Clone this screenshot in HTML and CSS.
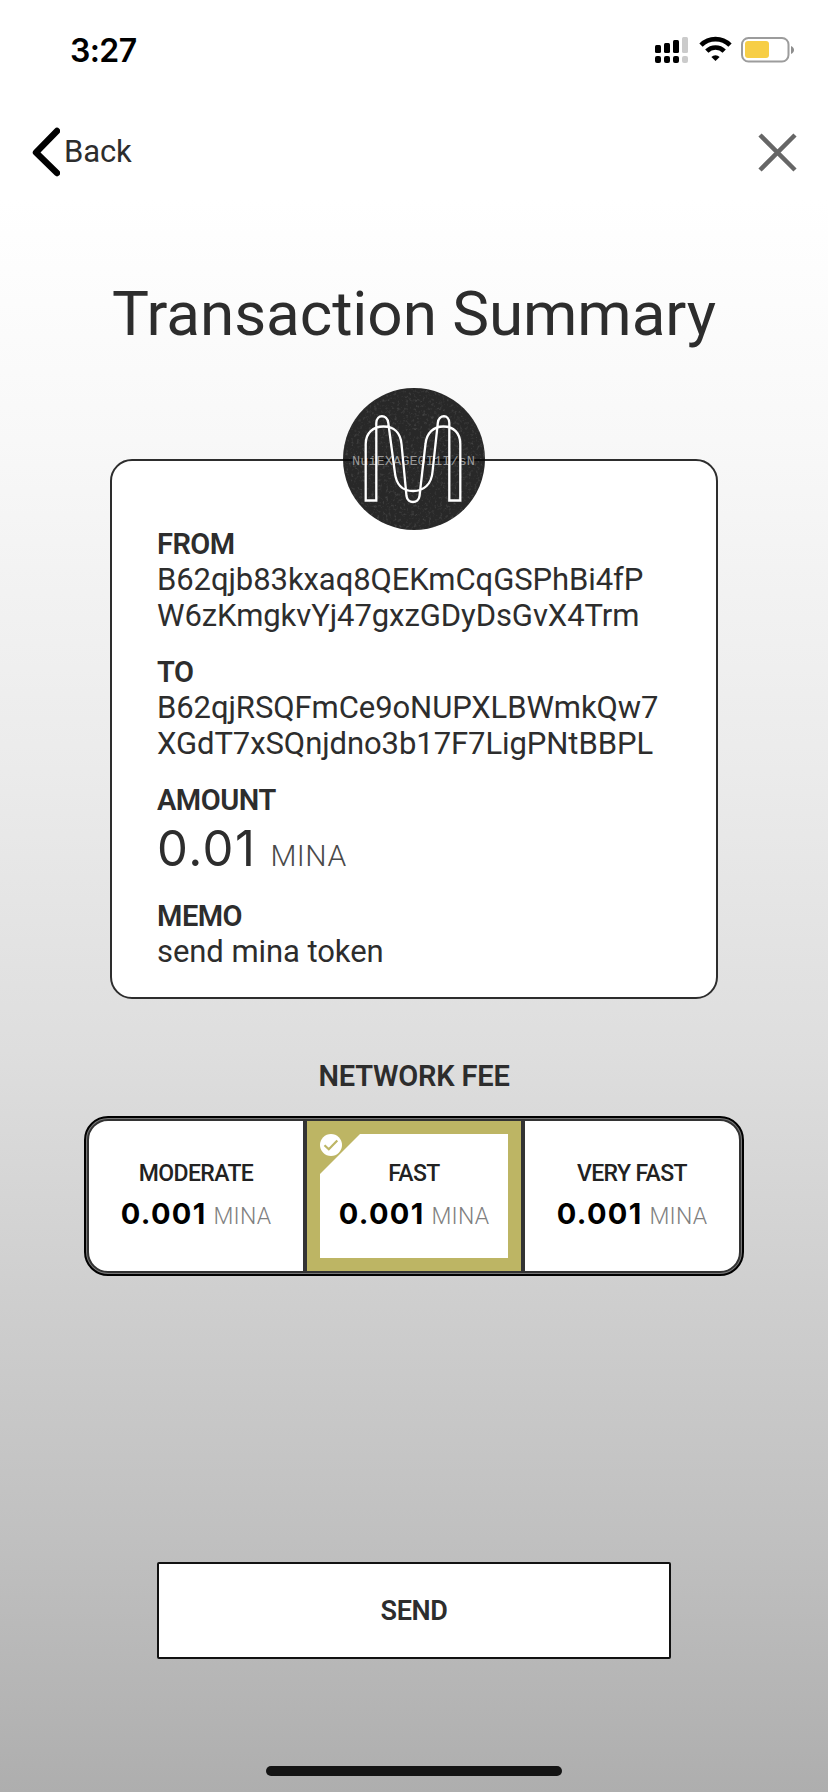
FILE: index.html
```html
<!DOCTYPE html>
<html lang="en">
<head>
<meta charset="utf-8">
<title>Transaction Summary</title>
<link rel="stylesheet" href="styles.css">
</head>
<body>
<div class="screen">
  <header class="status">
    <span class="time">3:27</span>
    <svg class="status-icons" width="144" height="32" viewBox="0 0 144 32">
      <g fill="#000">
        <rect x="3" y="11" width="6" height="8" rx="1.5"/><rect x="12" y="9" width="6" height="10" rx="1.5"/><rect x="21" y="6" width="6" height="13" rx="1.5"/>
        <rect x="3" y="22" width="6" height="7" rx="2"/><rect x="12" y="22" width="6" height="7" rx="2"/><rect x="21" y="22" width="6" height="7" rx="2"/>
      </g>
      <g fill="#cbcbcb"><rect x="30" y="3" width="6" height="16" rx="1.5"/><rect x="30" y="22" width="6" height="7" rx="2"/></g>
      <g fill="none" stroke="#000" stroke-width="4.6">
        <path d="M49 11.2a20.3 20.3 0 0 1 29 0"/>
        <path d="M54.800 17.200a12.200 12.200 0 0 1 17.400 0"/>
      </g>
      <path d="M63.500 27l-4.100-4.100a5.800 5.800 0 0 1 8.200 0z" fill="#000"/>
      <rect x="90" y="4" width="46.500" height="23.500" rx="6.500" fill="#fff" stroke="#9c9c9c" stroke-width="2"/>
      <rect x="93" y="7" width="24" height="17" rx="3" fill="#f7ce46"/>
      <path d="M139 12c4 1.500 4 6.500 0 8z" fill="#8e8e8e"/>
    </svg>
  </header>
  <nav class="nav">
    <a class="back">
      <svg width="30" height="50" viewBox="0 0 30 50"><path d="M27 4L6 25.500L27 46" fill="none" stroke="#000" stroke-width="6.400" stroke-linecap="round" stroke-linejoin="round"/></svg>
      <span class="back-label">Back</span>
    </a>
    <svg class="close" width="40" height="40" viewBox="0 0 40 40"><path d="M2 2L37 37M37 2L2 37" fill="none" stroke="#666" stroke-width="4.500"/></svg>
  </nav>
  <h1 class="title">Transaction Summary</h1>
  <main class="card">
    <svg class="avatar" width="142" height="142" viewBox="0 0 142 142">
      <defs>
        <clipPath id="disc"><circle cx="71" cy="71" r="71"/></clipPath>
        <filter id="grain" x="0" y="0" width="100%" height="100%">
          <feTurbulence type="fractalNoise" baseFrequency=".35" numOctaves="3" seed="4"/>
          <feColorMatrix values="0 0 0 0 1  0 0 0 0 1  0 0 0 0 1  1.500 0 0 0 -.78"/>
        </filter>
      </defs>
      <g clip-path="url(#disc)">
        <rect width="142" height="142" fill="#282828"/>
        <rect width="142" height="142" filter="url(#grain)" opacity=".25"/>
        <rect y="71" width="142" height="2" fill="#0c0c0c"/>
      </g>
      <text x="9" y="77" class="glitch" textLength="123" lengthAdjust="spacingAndGlyphs">NuiEXAGE0I1I/sN</text>
      <path d="M22.700 112.500V56C22.700 45 30 38.500 40.500 38.500S57.500 45 58.500 56L63.500 108C64.500 116 75.500 116 76.500 108L82.500 56C83.500 45 90.500 38.500 100.500 38.500S117.300 45 117.300 56V112.500H106.300V35C106.300 26 95.800 26 94.800 35L89.500 84C88.500 96 81 103 70 103S53 96 51.800 84L45.300 35C44.300 26 33.300 26 33.300 35V112.500Z" fill="none" stroke="#fff" stroke-width="2.300"/>
    </svg>
    <section class="field">
      <h2 class="label">FROM</h2>
      <p class="value">B62qjb83kxaq8QEKmCqGSPhBi4fP<br>W6zKmgkvYj47gxzGDyDsGvX4Trm</p>
    </section>
    <section class="field">
      <h2 class="label">TO</h2>
      <p class="value">B62qjRSQFmCe9oNUPXLBWmkQw7<br>XGdT7xSQnjdno3b17F7LigPNtBBPL</p>
    </section>
    <section class="field">
      <h2 class="label">AMOUNT</h2>
      <p class="amount-row"><span class="amount-num">0.01</span><span class="amount-unit">MINA</span></p>
    </section>
    <section class="field">
      <h2 class="label">MEMO</h2>
      <p class="value">send mina token</p>
    </section>
  </main>
  <h2 class="label fee-title">NETWORK FEE</h2>
  <div class="fees">
    <div class="fee fee-first">
      <span class="fee-name">MODERATE</span>
      <span class="fee-row"><b class="fee-num">0.001</b><span class="fee-unit">MINA</span></span>
    </div>
    <div class="fee selected">
      <svg class="check" width="40" height="40" viewBox="0 0 40 40">
        <path d="M0 0H40L0 40Z" fill="#bdb564"/>
        <circle cx="11" cy="11" r="11" fill="#fff"/>
        <path d="M4.500 11.200L8.800 15.200L17.300 6.500" fill="none" stroke="#bdb564" stroke-width="2.200"/>
      </svg>
      <span class="fee-name">FAST</span>
      <span class="fee-row"><b class="fee-num">0.001</b><span class="fee-unit">MINA</span></span>
    </div>
    <div class="fee fee-last">
      <span class="fee-name">VERY FAST</span>
      <span class="fee-row"><b class="fee-num">0.001</b><span class="fee-unit">MINA</span></span>
    </div>
  </div>
  <button class="send">SEND</button>
  <div class="home-bar"></div>
</div>
</body>
</html>
```
FILE: styles.css
```css
* { box-sizing: border-box; margin: 0; padding: 0; }
body { font-family: Roboto, sans-serif; color: #2d2d2d; }
svg { display: block; flex: none; }
.screen {
  width: 828px; height: 1792px; overflow: hidden;
  display: flex; flex-direction: column; align-items: center;
  background: linear-gradient(#fff 0, #fff 200px, #f8f8f8 440px, #ebebeb 770px, #dedede 1050px, #cfcfcf 1290px, #c0c0c0 1540px, #aeaeae 1792px);
}
.status {
  width: 100%; height: 96px; padding: 34px 32px 0 70px;
  display: flex; justify-content: space-between; align-items: flex-start;
}
.time { font: 600 32px/33px Inter, sans-serif; color: #000; letter-spacing: -0.6px; }
.nav {
  width: 100%; height: 112px; padding: 31px 30px 0 30px;
  display: flex; justify-content: space-between; align-items: flex-start;
}
.back { display: flex; }
.back-label { margin: 7px 0 0 4px; font-size: 31px; line-height: 36px; letter-spacing: -0.1px; }
.close { margin-top: 6px; }
.title { height: 180px; padding-top: 70px; font-weight: 400; font-size: 62px; line-height: 72px; letter-spacing: -0.06px; white-space: nowrap; }
.card {
  position: relative; width: 608px; height: 540px; margin-top: 71px; padding: 65px 0 0 45px;
  border: 2px solid #2d2d2d; border-radius: 22px; background: #fff;
}
.avatar { position: absolute; left: 231px; top: -73px; }
.glitch { font: 400 13px "Liberation Mono", monospace; fill: #999; }
.field { margin-bottom: 20px; white-space: nowrap; }
.label { font-size: 29px; line-height: 36px; font-weight: 600; letter-spacing: -0.5px; }
.value { font-size: 31px; line-height: 36px; letter-spacing: -0.07px; }
.amount-row { height: 60px; display: flex; align-items: baseline; }
.amount-num { font: 400 49px/62px Inter, sans-serif; letter-spacing: 1.5px; }
.amount-unit { margin-left: 14px; font-weight: 300; font-size: 30px; color: #4a4a4a; letter-spacing: 0.5px; }
.fee-title { margin-top: 59px; letter-spacing: -0.2px; }
.fees {
  width: 660px; height: 160px; margin-top: 22px; padding: 1px;
  display: grid; grid-template-columns: 1fr 1fr 1fr;
  border: 2px solid #000; border-radius: 24px; background: #777;
}
.fee {
  position: relative; padding-top: 39px; background: #fff; border: 2px solid #333;
  display: flex; flex-direction: column; align-items: center; white-space: nowrap;
}
.fee-first { border-radius: 21px 0 0 21px; }
.fee-last { border-radius: 0 21px 21px 0; }
.selected { box-shadow: inset 0 0 0 13px #bdb564; }
.check { position: absolute; left: 13px; top: 13px; }
.fee-name { font-size: 23px; line-height: 28px; font-weight: 500; color: #222; letter-spacing: -0.6px; }
.fee-row { display: flex; align-items: baseline; margin-top: 6px; }
.fee-num { font: 700 29px/40px Inter, sans-serif; color: #000; letter-spacing: 1.3px; }
.fee-unit { margin-left: 7px; font-size: 23px; font-weight: 300; color: #808080; letter-spacing: 0.2px; }
.send {
  width: 514px; height: 97px; margin-top: 286px; border: 2px solid #111; border-radius: 2px; background: #fff;
  font: 600 27px/36px Roboto, sans-serif; color: #2d2d2d; letter-spacing: -0.4px;
}
.home-bar { width: 296px; height: 10px; margin-top: 107px; border-radius: 5px; background: #141414; }
```
